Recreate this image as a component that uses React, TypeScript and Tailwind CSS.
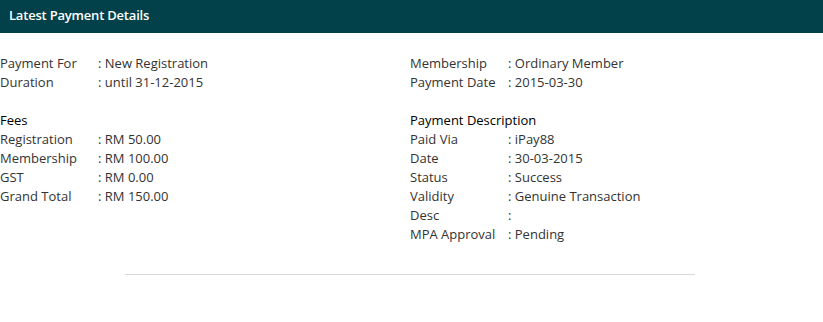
import React from 'react';

type Row = [string, string];

const topLeft: Row[] = [
  ['Payment For', 'New Registration'],
  ['Duration', 'until 31-12-2015'],
];

const topRight: Row[] = [
  ['Membership', 'Ordinary Member'],
  ['Payment Date', '2015-03-30'],
];

const fees: Row[] = [
  ['Registration', 'RM 50.00'],
  ['Membership', 'RM 100.00'],
  ['GST', 'RM 0.00'],
  ['Grand Total', 'RM 150.00'],
];

const payment: Row[] = [
  ['Paid Via', 'iPay88'],
  ['Date', '30-03-2015'],
  ['Status', 'Success'],
  ['Validity', 'Genuine Transaction'],
  ['Desc', ''],
  ['MPA Approval', 'Pending'],
];

function Rows({ rows }: { rows: Row[] }) {
  return (
    <div>
      {rows.map(([label, value]) => (
        <div key={label} className="flex h-[19px] items-center">
          <span className="w-[98px] shrink-0">{label}</span>
          <span>: {value}</span>
        </div>
      ))}
    </div>
  );
}

export default function App() {
  return (
    <div className="min-h-screen bg-white font-['Open_Sans',sans-serif] text-[13px] text-[#333]">
      {/* header bar */}
      <div className="h-[33px] bg-[#02414a] pl-[9px] flex items-center">
        <h2 className="text-white text-[13px] font-semibold tracking-[-0.2px] -mt-[2px]">Latest Payment Details</h2>
      </div>

      <div className="grid grid-cols-[410px_1fr] pt-[21px]">
        <div>
          <Rows rows={topLeft} />
          <div className="h-[19px]" />
          <h3 className="h-[19px] flex items-center text-[13px] text-black">Fees</h3>
          <Rows rows={fees} />
        </div>
        <div>
          <Rows rows={topRight} />
          <div className="h-[19px]" />
          <h3 className="h-[19px] flex items-center text-[13px] text-black">Payment Description</h3>
          <Rows rows={payment} />
        </div>
      </div>

      <div className="mt-[30px] ml-[125px] w-[570px] border-t border-[#d9d9d9]" />
    </div>
  );
}
